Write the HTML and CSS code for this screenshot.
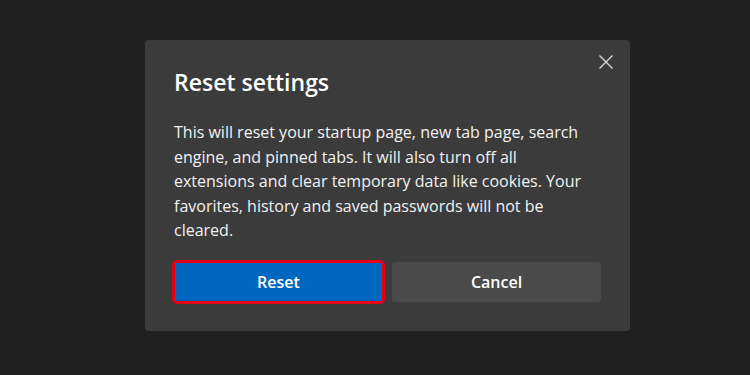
FILE: index.html
```html
<!DOCTYPE html>
<html lang="en">
<head>
    <meta charset="UTF-8">
    <title>Reset settings</title>
    <link rel="stylesheet" href="styles.css">
</head>
<body>
    <div class="dialog">
        <button class="close" aria-label="Close">
            <svg width="16" height="16" viewBox="0 0 16 16">
                <path d="M1.5 1.5 L14.5 14.5 M14.5 1.5 L1.5 14.5" stroke="#d6d6d6" stroke-width="1.4" fill="none"/>
            </svg>
        </button>
        <h1 class="title">Reset settings</h1>
        <p class="message">This will reset your startup page, new tab page, search engine, and pinned tabs. It will also turn off all extensions and clear temporary data like cookies. Your favorites, history and saved passwords will not be cleared.</p>
        <div class="actions">
            <button class="btn btn-primary">Reset</button>
            <button class="btn btn-secondary">Cancel</button>
        </div>
    </div>
</body>
</html>
```

FILE: styles.css
```css
body {
    margin: 0;
    background-color: #202020;
    font-family: 'Open Sans', sans-serif;
    width: 750px;
    height: 375px;
    overflow: hidden;
}
.dialog {
    position: relative;
    box-sizing: border-box;
    width: 485px;
    height: 291px;
    margin: 40px 0 0 145px;
    padding: 27px 29px 0 29px;
    background-color: #3b3b3b;
    border-radius: 4px;
    color: #ffffff;
}
.close {
    position: absolute;
    top: 10px;
    right: 12px;
    width: 24px;
    height: 24px;
    padding: 0;
    border: none;
    background: none;
    display: flex;
    align-items: center;
    justify-content: center;
}
.title {
    margin: 0 0 23px 0;
    font-size: 23px;
    font-weight: 600;
    line-height: 30px;
}
.message {
    margin: 0;
    max-width: 415px;
    font-size: 16px;
    line-height: 24.5px;
    color: #f2f2f2;
}
.actions {
    display: flex;
    gap: 9px;
    margin-top: 19px;
}
.btn {
    flex: 1;
    height: 40px;
    border: none;
    border-radius: 3px;
    font-family: 'Open Sans', sans-serif;
    font-size: 16px;
    font-weight: 600;
    color: #ffffff;
}
.btn-primary {
    background-color: #0067c0;
    outline: 3px solid #e3000f;
    outline-offset: -1px;
}
.btn-secondary {
    background-color: #4a4a4a;
}
```
